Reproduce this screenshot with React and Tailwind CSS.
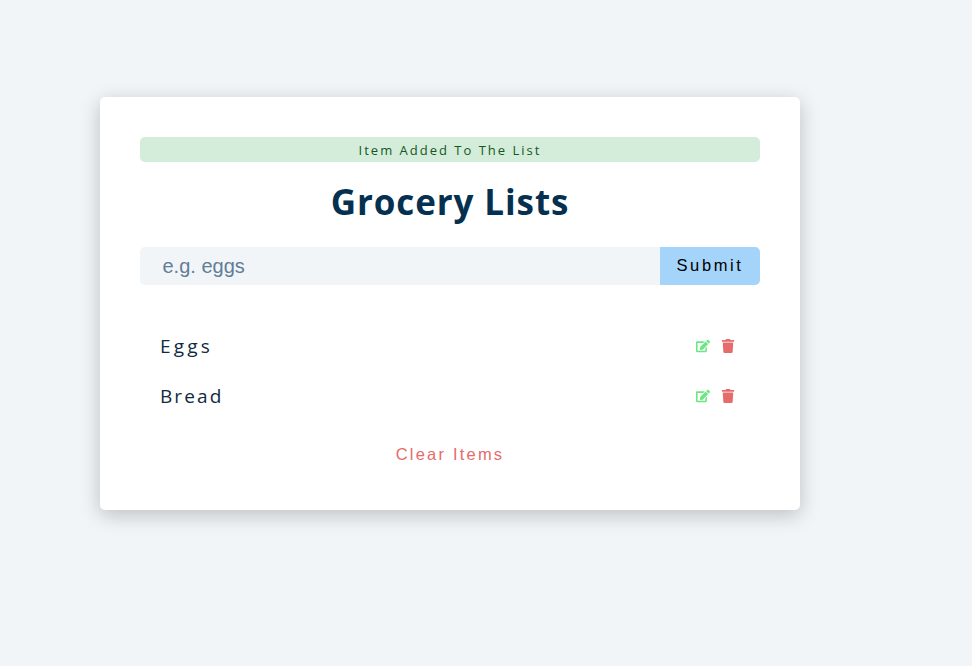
import { FaEdit, FaTrash } from "react-icons/fa";

const items = [
  { name: "Eggs", spacing: "tracking-[3.2px]" },
  { name: "Bread", spacing: "tracking-[2.1px]" },
];

export default function App() {
  return (
    <main className="min-h-screen overflow-hidden bg-[#f1f5f8] pt-[97px] pl-[100px] font-['Open_Sans',sans-serif] text-[#102a42]">
      <section className="h-[413px] w-[700px] rounded-[5px] bg-white p-10 shadow-[0_5px_20px_rgba(0,0,0,0.22)]">
        <p className="flex h-[25px] items-center justify-center rounded-[5px] bg-[#d4edda] pt-0.5 text-[13px] tracking-[2px] text-[#155724]">
          Item Added To The List
        </p>
        <h3 className="mt-[18px] mb-[23px] text-center text-[35px] leading-[44px] font-bold tracking-[0.9px] text-[#05304f]">
          Grocery Lists
        </h3>
        <form className="flex h-[38px] font-['Liberation_Sans',sans-serif]">
          <input
            type="text"
            placeholder="e.g. eggs"
            className="w-[520px] rounded-l-[5px] bg-[#f1f5f8] pl-[22.5px] text-[20px] placeholder:text-[#617d98]"
          />
          <button type="button" className="w-[100px] rounded-r-[5px] bg-[#a5d4fa] pb-0.5 text-[16.5px] tracking-[2.6px] text-black">
            Submit
          </button>
        </form>
        <div className="mt-9">
          {items.map((item) => (
            <article key={item.name} className="flex h-[50px] items-center justify-between px-5">
              <p className={`text-[19px] ${item.spacing}`}>{item.name}</p>
              <div className="flex gap-[11px] pr-[5px] text-[14px]">
                <FaEdit className="text-[#69e781]" />
                <FaTrash className="text-[#e66b6b]" />
              </div>
            </article>
          ))}
        </div>
        <button type="button" className="mx-auto mt-[21px] block font-['Liberation_Sans',sans-serif] text-[16.5px] tracking-[2.2px] text-[#e66b6b]">
          Clear Items
        </button>
      </section>
    </main>
  );
}
